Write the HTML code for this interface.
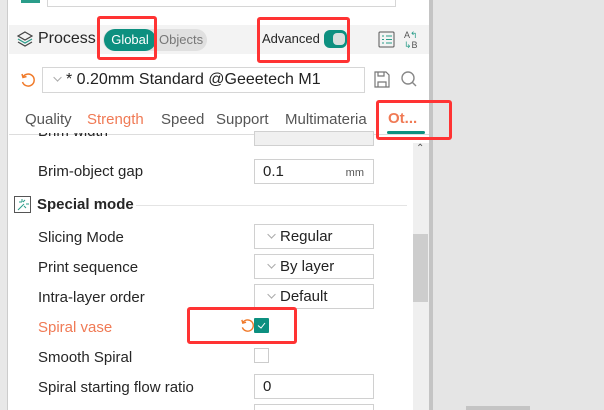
<!DOCTYPE html>
<html style="overflow:hidden;height:410px"><head><meta charset="utf-8"><style>
*{margin:0;padding:0;box-sizing:border-box}
html,body{overflow:hidden}
body{width:604px;height:410px;background:#e5e5e5;font-family:"Liberation Sans","Noto Sans CJK SC",sans-serif;position:relative}
.panel{position:absolute;left:0;top:0;width:429px;height:410px;background:#fff}
.divider{position:absolute;left:429px;top:0;width:4px;height:410px;background:#c4c4c4}
.a{position:absolute}
.t{position:absolute;font-size:15px;color:#262626;white-space:nowrap}
.box{position:absolute;border:1px solid #d6d6d6;background:#fff}
.red{position:absolute;border:3px solid #f33;border-radius:3px}
.lbl{position:absolute;left:38px;font-size:15px;color:#262626}
.inp{position:absolute;left:254px;width:120px;height:25px;border:1px solid #d0d0d0;font-size:15px;padding-left:8px;line-height:23px;color:#222}
.chev{display:inline-block;width:6px;height:6px;border-right:1px solid #aaa;border-bottom:1px solid #aaa;transform:rotate(45deg) translateY(-5px);margin-right:9px;margin-left:2px}
</style></head><body>
<div class="panel"></div>
<div class="a" style="left:0;top:0;width:8px;height:410px;background:#e8e8e8;border-right:1px solid #ccc"></div>
<div class="divider"></div>
<div class="a" style="left:21px;top:0;width:19px;height:3px;background:#2a9d8a"></div>
<div class="box" style="left:47px;top:-2px;width:349px;height:9px"></div>
<div class="a" style="left:9px;top:25px;width:420px;height:29px;background:#f3f3f3"></div>
<svg class="a" style="left:16px;top:30px" width="18" height="18" viewBox="0 0 18 18" fill="none" stroke="#444" stroke-width="1.2"><path d="M9 2 L16 6 L9 10 L2 6Z"/><path d="M2 9 L9 13 L16 9" stroke="#2a9d8a"/><path d="M2 12 L9 16 L16 12"/></svg>
<div class="t" style="left:38px;top:30px;font-size:16px">Process</div>
<div class="a" style="left:103px;top:29px;width:104px;height:22px;border-radius:11px;background:#e0e0e0"></div>
<div class="a" style="left:104px;top:29px;width:52px;height:22px;border-radius:11px;background:#0d9080;color:#fff;font-size:13px;text-align:center;line-height:22px">Global</div>
<div class="t" style="left:159px;top:32px;font-size:13px;color:#777">Objects</div>
<div class="t" style="left:262px;top:31px;font-size:13px">Advanced</div>
<div class="a" style="left:324px;top:30px;width:23px;height:18px;border-radius:6px;background:#0d9080"></div>
<div class="a" style="left:333px;top:33px;width:12px;height:12px;border-radius:4px;background:#d8e0de"></div>
<svg class="a" style="left:378px;top:31px" width="17" height="17" viewBox="0 0 17 17" fill="none" stroke="#555" stroke-width="1"><rect x="1" y="1" width="15" height="15" rx="1"/><path d="M4 5h2M8 5h6M4 8.5h2M8 8.5h6M4 12h2M8 12h6" stroke="#2a9d8a"/></svg>
<div class="t" style="left:404px;top:30px;font-size:9px;color:#555;line-height:10px">A<span style="color:#2a9d8a">↰</span><br><span style="color:#2a9d8a">↳</span>B</div>
<svg class="a" style="left:20px;top:72px" width="16" height="16" viewBox="0 0 16 16" fill="none" stroke="#f07a2a" stroke-width="1.5"><path d="M3 5 A6 6 0 1 1 2.5 10"/><path d="M2 2 L3 5.5 L6.5 4.5"/></svg>
<div class="box" style="left:42px;top:67px;width:323px;height:26px;font-size:16px;line-height:24px;padding-left:6px;color:#222"><span class="chev"></span>* 0.20mm Standard @Geeetech M1</div>
<svg class="a" style="left:374px;top:71px" width="16" height="17" viewBox="0 0 16 17" fill="none" stroke="#777" stroke-width="1.2"><path d="M1 1h11l3 3v12H1z"/><path d="M4 16v-5h8v5M4 1v4h6V1"/></svg>
<svg class="a" style="left:400px;top:70px" width="18" height="18" viewBox="0 0 18 18" fill="none" stroke="#888" stroke-width="1.4"><circle cx="8" cy="8" r="6"/><path d="M12.5 12.5L16 16"/></svg>
<div class="t" style="left:25px;top:111px;font-size:15px;color:#555">Quality</div>
<div class="t" style="left:87px;top:111px;font-size:15px;color:#f07a55">Strength</div>
<div class="t" style="left:161px;top:111px;font-size:15px;color:#555">Speed</div>
<div class="t" style="left:216px;top:111px;font-size:15px;color:#555">Support</div>
<div class="t" style="left:285px;top:111px;font-size:15px;color:#555;width:88px;overflow:hidden">Multimateria</div>
<div class="t" style="left:388px;top:110px;font-size:15px;color:#f07a55;font-weight:bold">Ot...</div>
<div class="a" style="left:387px;top:131px;width:38px;height:3px;background:#0d9080;border-radius:2px"></div>
<div class="a" style="left:9px;top:134px;width:420px;height:1px;background:#ddd"></div>
<div class="a" style="left:413px;top:143px;width:16px;height:267px;background:#efefef"></div>
<div class="a" style="left:413px;top:234px;width:15px;height:68px;background:#cdcdcd"></div>
<div class="t" style="left:416px;top:143px;font-size:10px;color:#555">⌃</div>
<div class="lbl" style="top:133px;height:13px;overflow:hidden;line-height:6px"><span style="position:relative;top:-4px">Brim width</span></div>
<div class="inp" style="top:131px;height:15px;background:#f0f0f0"></div>
<div class="lbl" style="top:163px">Brim-object gap</div>
<div class="inp" style="top:159px">0.1<span style="position:absolute;right:9px;top:2px;font-size:11px;color:#555">mm</span></div>
<svg class="a" style="left:14px;top:196px" width="17" height="17" viewBox="0 0 17 17" fill="none" stroke="#555" stroke-width="1"><rect x=".5" y=".5" width="16" height="16"/><path d="M4 14L10 8M8 3v3M5 6h3M11 4l-2 2M12 8h3M10 10l2 2" stroke="#2a9d8a"/></svg>
<div class="t" style="left:37px;top:196px;font-size:15px;font-weight:bold">Special mode</div>
<div class="a" style="left:136px;top:205px;width:271px;height:1px;background:#e4e4e4"></div>
<div class="lbl" style="top:229px">Slicing Mode</div>
<div class="inp" style="top:224px"><span class="chev"></span>Regular</div>
<div class="lbl" style="top:259px">Print sequence</div>
<div class="inp" style="top:254px"><span class="chev"></span>By layer</div>
<div class="lbl" style="top:289px">Intra-layer order</div>
<div class="inp" style="top:284px"><span class="chev"></span>Default</div>
<div class="lbl" style="top:319px;color:#f07a55">Spiral vase</div>
<svg class="a" style="left:240px;top:318px" width="15" height="15" viewBox="0 0 16 16" fill="none" stroke="#f07a2a" stroke-width="1.5"><path d="M3 5 A6 6 0 1 1 2.5 10"/><path d="M2 2 L3 5.5 L6.5 4.5"/></svg>
<div class="a" style="left:254px;top:318px;width:15px;height:15px;background:#0d9080;border-radius:1px"></div>
<svg class="a" style="left:256px;top:321px" width="11" height="9" viewBox="0 0 11 9" fill="none" stroke="#fff" stroke-width="1"><path d="M2 4.5L5 7L9 2"/></svg>
<div class="lbl" style="top:349px">Smooth Spiral</div>
<div class="a" style="left:254px;top:348px;width:15px;height:15px;border:1px solid #ccc"></div>
<div class="lbl" style="top:379px">Spiral starting flow ratio</div>
<div class="inp" style="top:374px">0</div>
<div class="inp" style="top:404px;height:6px;border-bottom:none"></div>
<div class="a" style="left:466px;top:406px;width:64px;height:4px;background:#c4c4c4"></div>
<div class="red" style="left:97px;top:16px;width:60px;height:44px"></div>
<div class="red" style="left:257px;top:17px;width:93px;height:46px"></div>
<div class="red" style="left:376px;top:100px;width:76px;height:40px"></div>
<div class="red" style="left:187px;top:307px;width:110px;height:37px"></div>
</body></html>
